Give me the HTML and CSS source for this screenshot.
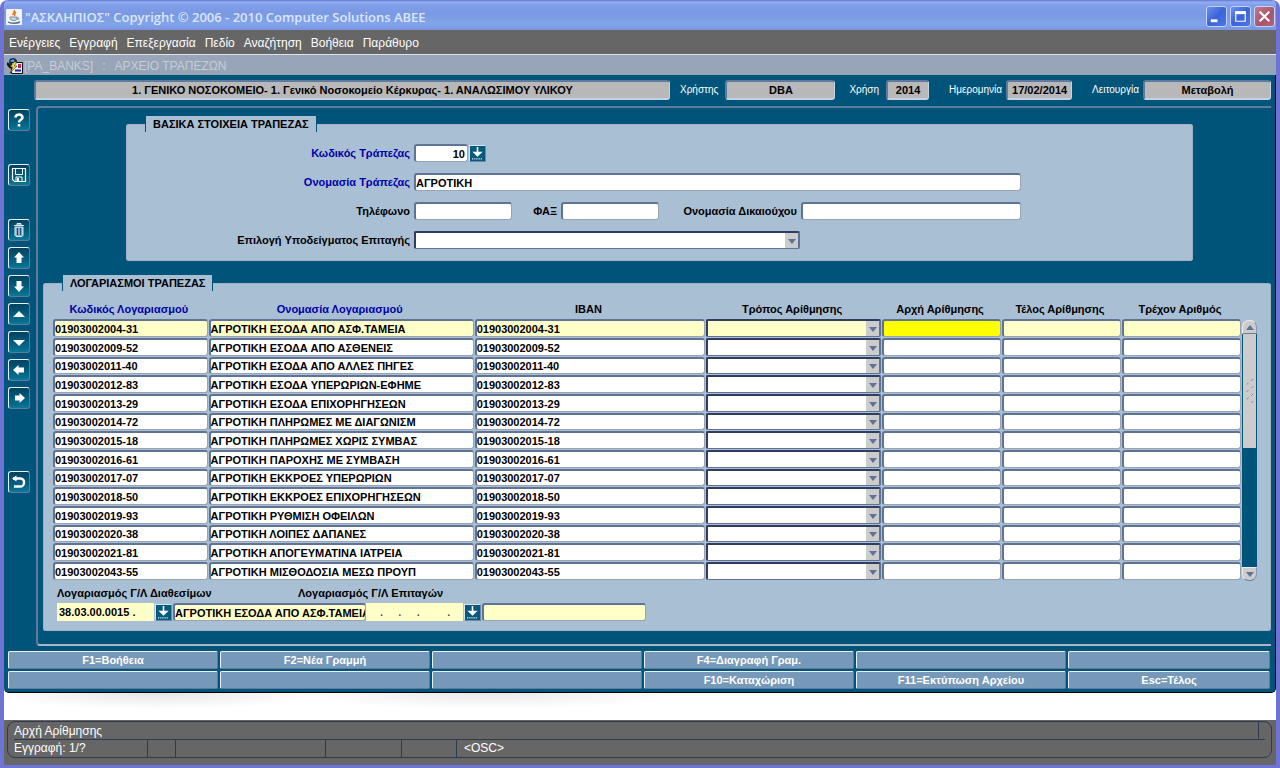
FILE: index.html
```
<!DOCTYPE html>
<html lang="el">
<head>
<meta charset="utf-8">
<meta name="viewport" content="width=device-width, initial-scale=1">
<title>ΑΣΚΛΗΠΙΟΣ</title>
<link rel="stylesheet" href="styles.css">
</head>
<body>
<div class="window">
  <header class="titlebar">
    <svg class="java" viewBox="0 0 16 16" aria-hidden="true"><rect x="0" y="0" width="16" height="16" rx="1" fill="#f4f4f0"/><path d="M8 1c2 2-2 3-1 5M10 3c-2 1-2 2-1 4" stroke="#e8752a" stroke-width="1.5" fill="none"/><path d="M4 8h7v2c0 2-6 2-7 0zM11 8.500c3 0 2 2 0 2" stroke="#7a8fa8" fill="#c9d3dd"/><path d="M2 13c2 1.500 9 1.500 12 0" stroke="#56708f" stroke-width="1.500" fill="none"/></svg>
    <h1 class="title">"ΑΣΚΛΗΠΙΟΣ" Copyright © 2006 - 2010 Computer Solutions ABEE</h1>
    <div class="winbuttons">
      <button class="winbtn" aria-label="Ελαχιστοποίηση"><svg viewBox="0 0 20 20"><path d="M4 13h7v3H4z" fill="#fff"/></svg></button>
      <button class="winbtn" aria-label="Μεγιστοποίηση"><svg viewBox="0 0 20 20"><path d="M5 5h10v10H5z" fill="none" stroke="#fff" stroke-width="1.200"/><path d="M4.500 4.500h11v3h-11z" fill="#fff"/></svg></button>
      <button class="winbtn close" aria-label="Κλείσιμο"><svg viewBox="0 0 20 20"><path d="M5 5l10 10M15 5L5 15" stroke="#fff" stroke-width="2.200"/></svg></button>
    </div>
  </header>
  <nav class="menubar">
    <button>Ενέργειες</button><button>Εγγραφή</button><button>Επεξεργασία</button><button>Πεδίο</button><button>Αναζήτηση</button><button>Βοήθεια</button><button>Παράθυρο</button>
  </nav>
  <div class="doctitle">
    <svg class="docicon" viewBox="0 0 16 16" aria-hidden="true"><circle cx="6" cy="4" r="4" fill="#16315f"/><path d="M3 3l3-2 2 2-2 2z" fill="#5a9bd0"/><path d="M4.500 4.500h11v11h-11z" fill="#eee" stroke="#111"/><path d="M0 5l4 5" stroke="#111" stroke-width="2.500"/><path d="M7 4L3 9h3l-3 6 7-7H7l3-4z" fill="#ffe52a" stroke="#111" stroke-width=".5"/><path d="M11 6h3v4h-3z" fill="#b82862"/><path d="M8 12.500h6" stroke="#2525a0" stroke-width="2"/></svg>
    <span>[PA_BANKS]</span><span>:</span><span>ΑΡΧΕΙΟ ΤΡΑΠΕΖΩΝ</span>
  </div>
  <main class="form">
    <div class="session">
      <output class="info unit">1. ΓΕΝΙΚΟ ΝΟΣΟΚΟΜΕΙΟ- 1. Γενικό Νοσοκομείο Κέρκυρας- 1. ΑΝΑΛΩΣΙΜΟΥ ΥΛΙΚΟΥ</output>
      <span class="pair"><label for="o-user">Χρήστης</label><output id="o-user" class="info user">DBA</output></span>
      <span class="pair"><label for="o-year">Χρήση</label><output id="o-year" class="info year">2014</output></span>
      <span class="pair tight"><label for="o-date">Ημερομηνία</label><output id="o-date" class="info date">17/02/2014</output></span>
      <span class="pair tight"><label for="o-mode">Λειτουργία</label><output id="o-mode" class="info mode">Μεταβολή</output></span>
    </div>
    <div class="workspace">
      <div class="tools">
        <button class="tool" aria-label="Βοήθεια"><svg viewBox="0 0 18 18"><path d="M5.500 6.500c0-4 7-4 7 0 0 2.500-3.500 2-3.500 5M9 13v2.500" fill="none" stroke="#fff" stroke-width="2.600"/></svg></button>
        <button class="tool save" aria-label="Αποθήκευση"><svg viewBox="0 0 18 18"><path d="M2.500 2.500h13v13h-11l-2-2z" fill="none" stroke="#fff" stroke-width="1.200"/><path d="M5.500 3v5.500h7V3M6 15v-4h6v4" fill="none" stroke="#fff"/><path d="M7 12h2v3H7z" fill="#fff"/></svg></button>
        <button class="tool trash" aria-label="Διαγραφή"><svg viewBox="0 0 18 18"><path d="M4 4.500h10M7 4V2.500h4V4M5 6v8.500l1 1h6l1-1V6z" fill="#8fabc2" stroke="#dce8f0"/><path d="M7.500 7v7M10.500 7v7" stroke="#0a5678"/></svg></button>
        <button class="tool" aria-label="Πρώτη εγγραφή"><svg viewBox="0 0 18 18"><path d="M9 3l5 5.500h-2.500V14h-5V8.500H4z" fill="#fff"/></svg></button>
        <button class="tool" aria-label="Τελευταία εγγραφή"><svg viewBox="0 0 18 18"><path d="M9 15l5-5.500h-2.500V4h-5v5.500H4z" fill="#fff"/></svg></button>
        <button class="tool" aria-label="Προηγούμενη εγγραφή"><svg viewBox="0 0 18 18"><path d="M9 6l6 6H3z" fill="#fff"/></svg></button>
        <button class="tool" aria-label="Επόμενη εγγραφή"><svg viewBox="0 0 18 18"><path d="M9 13l6-6H3z" fill="#fff"/></svg></button>
        <button class="tool" aria-label="Προηγούμενο πεδίο"><svg viewBox="0 0 18 18"><path d="M3 9l5.500-5v2.500H14v5H8.500V14z" fill="#fff"/></svg></button>
        <button class="tool" aria-label="Επόμενο πεδίο"><svg viewBox="0 0 18 18"><path d="M15 9l-5.500-5v2.500H5v5h4.500V14z" fill="#fff"/></svg></button>
        <button class="tool back" aria-label="Επιστροφή"><svg viewBox="0 0 18 18"><path d="M3 5.500h7.500c5 0 4.500 8 0 8H4" fill="none" stroke="#fff" stroke-width="2.400"/><path d="M6.500 2.500v6L2 5.500z" fill="#fff"/></svg></button>
      </div>
      <div class="frame">
        <fieldset class="panel bank">
          <legend>ΒΑΣΙΚΑ ΣΤΟΙΧΕΙΑ ΤΡΑΠΕΖΑΣ</legend>
          <div class="row"><label class="lead key" for="code">Κωδικός Τράπεζας</label><input id="code" class="field w-code" value="10"><button class="lov" aria-label="Λίστα τραπεζών"><svg viewBox="0 0 14 14"><path d="M7 1v7M4 6l3 3 3-3z" fill="#fff" stroke="#fff" stroke-width="1.500"/><path d="M2 12h10" stroke="#fff" stroke-dasharray="1 1"/></svg></button></div>
          <div class="row"><label class="lead key" for="name">Ονομασία Τράπεζας</label><input id="name" class="field w-name" value="ΑΓΡΟΤΙΚΗ"></div>
          <div class="row"><label class="lead" for="tel">Τηλέφωνο</label><input id="tel" class="field w-phone"><label class="mid fax" for="fax">ΦΑΞ</label><input id="fax" class="field w-phone"><label class="mid payee" for="payee">Ονομασία Δικαιούχου</label><input id="payee" class="field w-payee"></div>
          <div class="row"><label class="lead" for="tpl">Επιλογή Υποδείγματος Επιταγής</label><span class="combo w-tpl"><select id="tpl"><option></option></select></span></div>
        </fieldset>
        <fieldset class="panel accounts">
          <legend>ΛΟΓΑΡΙΑΣΜΟΙ ΤΡΑΠΕΖΑΣ</legend>
          <div class="gridwrap">
            <table class="grid">
              <colgroup><col class="c1"><col class="c2"><col class="c3"><col class="c4"><col class="c5"><col class="c5"><col class="c5"></colgroup>
              <thead><tr><th class="key">Κωδικός Λογαριασμού</th><th class="key">Ονομασία Λογαριασμού</th><th>IBAN</th><th>Τρόπος Αρίθμησης</th><th>Αρχή Αρίθμησης</th><th>Τέλος Αρίθμησης</th><th>Τρέχον Αριθμός</th></tr></thead>
              <tbody id="accounts"></tbody>
            </table>
            <div class="scroll">
              <button class="sbtn up" aria-label="Πάνω"></button>
              <div class="track"><div class="thumb"><svg viewBox="0 0 14 28"><path d="M4 7l2-2M9 3l2-2M4 15l2-2M9 11l2-2M4 23l2-2M9 19l2-2M9 27l2-2" stroke="#6c7d99"/></svg></div></div>
              <button class="sbtn down" aria-label="Κάτω"></button>
            </div>
          </div>
          <div class="ledger">
            <div class="gl first"><label for="gl1">Λογαριασμός Γ/Λ Διαθεσίμων</label>
              <div class="glrow"><input id="gl1" class="flat" value="38.03.00.0015 ."><button class="lov" aria-label="Λίστα διαθεσίμων"><svg viewBox="0 0 14 14"><path d="M7 1v7M4 6l3 3 3-3z" fill="#fff" stroke="#fff" stroke-width="1.500"/><path d="M2 12h10" stroke="#fff" stroke-dasharray="1 1"/></svg></button><input class="field pale w-gl1" aria-label="Περιγραφή διαθεσίμων" value="ΑΓΡΟΤΙΚΗ ΕΣΟΔΑ ΑΠΟ ΑΣΦ.ΤΑΜΕΙΑ"></div></div>
            <div class="gl second"><label for="gl2">Λογαριασμός Γ/Λ Επιταγών</label>
              <div class="glrow"><input id="gl2" class="flat dots" value=".     .     .         ."><button class="lov" aria-label="Λίστα επιταγών"><svg viewBox="0 0 14 14"><path d="M7 1v7M4 6l3 3 3-3z" fill="#fff" stroke="#fff" stroke-width="1.500"/><path d="M2 12h10" stroke="#fff" stroke-dasharray="1 1"/></svg></button><input class="field pale w-gl2" aria-label="Περιγραφή επιταγών"></div></div>
          </div>
        </fieldset>
      </div>
    </div>
    <div class="fkeys">
      <button>F1=Βοήθεια</button><button>F2=Νέα Γραμμή</button><button aria-label="F3"></button><button>F4=Διαγραφή Γραμ.</button><button aria-label="F5"></button><button aria-label="F6"></button>
      <button aria-label="F7"></button><button aria-label="F8"></button><button aria-label="F9"></button><button>F10=Καταχώριση</button><button>F11=Εκτύπωση Αρχείου</button><button>Esc=Τέλος</button>
    </div>
  </main>
  <div class="desk"></div>
  <footer class="status">
    <div class="statusbox">
      <div class="line hint"><span>Αρχή Αρίθμησης</span></div>
      <div class="line cells"><span class="s1">Εγγραφή: 1/?</span><span class="s2"></span><span class="s3"></span><span class="s4"></span><span class="s5"></span><span>&lt;OSC&gt;</span></div>
    </div>
  </footer>
</div>
<script src="app.js"></script>
</body>
</html>
```
FILE: styles.css
```
* { box-sizing: border-box; }
body { margin: 0; background: #fff; font: bold 11px/14px "Liberation Sans", Arial, sans-serif; color: #000; }
button, input, select { font: inherit; color: inherit; margin: 0; padding: 0; border-radius: 0; }
button svg { display: block; width: 100%; height: 100%; }

.window { display: flex; flex-direction: column; min-height: 100vh; background: #fff; border: solid #6d74d6; border-width: 0 4px 4px; border-radius: 8px 8px 0 0; overflow: hidden; }
.titlebar { display: flex; align-items: center; height: 30px; margin: 0 -4px; padding: 3px 5px 0 6px; gap: 3px; background: linear-gradient(#6673d0 0, #90aef0 2px, #7f9de8 6px, #7b98e2 14px, #82a5ea 24px, #7994df 100%); }
.java { width: 16px; height: 16px; }
.title { flex: 1; margin: 0; font: 600 13px/18px "Open Sans", "Noto Sans", sans-serif; color: #dbe6fb; white-space: nowrap; }
.winbuttons { display: flex; gap: 3px; }
.winbtn { width: 21px; height: 21px; border: 1px solid #c2d2f8; border-radius: 3px; background: linear-gradient(135deg, #6a92f0, #3d62d8 50%, #4c7ae8); }
.winbtn.close { background: linear-gradient(135deg, #c27a90, #a95468 60%, #b0687e); }

.menubar { display: flex; align-items: center; gap: 9px; height: 24px; padding: 2px 0 0 5px; background: #666; }
.menubar button { border: 0; background: none; color: #fff; font-weight: 400; font-size: 12px; white-space: nowrap; }
.doctitle { display: flex; align-items: center; height: 21px; padding: 1px 0 0 3px; background: #98a4b8; border-top: 1px solid #dde3ea; color: #c6ccd6; font-weight: 400; font-size: 12px; white-space: pre; }
.doctitle span + span { margin-left: 9px; }
.docicon { width: 16px; height: 16px; margin-right: 1px; }

.form { background: #00547a; padding: 5px 1px 3px 4px; border-right: 1px solid #000; border-bottom: 1px solid #000; border-radius: 0 0 5px 5px; }
.session { display: flex; align-items: center; padding: 0 3px 0 26px; gap: 14px; }
.info { display: block; height: 20px; border: 2px solid; border-color: #5e7a9e #c3d3e2 #c3d3e2 #5e7a9e; border-right-width: 1px; border-radius: 3px; background: #b8b8b8; text-align: center; line-height: 17px; white-space: nowrap; }
.unit { flex: 1; margin-right: -4px; }
.pair { display: flex; align-items: center; gap: 7px; color: #fff; font-size: 10px; font-weight: 400; }
.pair.tight { gap: 4px; margin-left: 6px; }
.pair .info { color: #000; font-size: 11px; font-weight: 700; }
.user { width: 110px; }
.year { width: 43px; }
.date { width: 66px; }
.mode { width: 128px; }

.workspace { display: flex; gap: 6px; margin: 6px 3px 0 0; }
.tools { display: flex; flex-direction: column; gap: 6px; padding-top: 3px; }
.tool { width: 22px; height: 22px; padding: 1px; border: 1px solid; border-color: #e6f0f6 #5e7a9e #5e7a9e #e6f0f6; border-radius: 3px; background: linear-gradient(#01425f, #046a8c 80%, #0f7896); }
.save, .trash { margin-top: 27px; }
.back { margin-top: 56px; }
.frame { flex: 1; min-width: 0; padding: 8px 0 13px 5px; border: 2px solid #5e7a9e; border-bottom-color: #a9b4c4; border-right: 0; border-radius: 4px 0 0 4px; }

.panel { min-width: 0; margin: 0; padding: 0; border: 1px solid #a0b2c4; border-radius: 3px; background: #a9bfd3; }
.panel legend { height: 16px; padding: 0 7px; line-height: 17px; background: #a9bfd3; border: solid #00547a; border-width: 0 1px; }
.bank { margin: 0 78px 0 83px; padding: 12px 0 11px; }
.bank legend { margin-left: 18px; }
.row { display: flex; align-items: center; height: 18px; }
.row + .row { margin-top: 11px; }
.key, .row .key { color: #0000a8; }
.lead { width: 283px; margin-right: 4px; text-align: right; white-space: nowrap; }
.mid { text-align: right; margin-right: 4px; white-space: nowrap; }
.fax { width: 45px; }
.payee { width: 138px; }
.field { height: 18px; border: solid; border-width: 2px 1px 1px 2px; border-color: #5f7396 #98a4b4 #98a4b4 #5f7396; border-radius: 3px; background: #fff; }
.w-code { width: 54px; padding-right: 2px; text-align: right; }
.w-name { width: 607px; }
.w-phone { width: 98px; }
.w-payee { width: 220px; }
.w-tpl { width: 386px; height: 18px; }
.lov { width: 17px; height: 17px; margin-left: 1px; border: 1px solid; border-color: #d8e4ee #6c88a6 #6c88a6 #d8e4ee; background: #075a7c; }

.combo { display: block; position: relative; }
.combo select { display: block; appearance: none; width: 100%; height: 100%; border: 1px solid #5f7396; border-width: 2px 2px 1px 2px; border-color: #2e3d60 #5f7396 #5f7396 #2e3d60; border-radius: 2px; background: linear-gradient(#ccc, #ccc) right / 13px 100% no-repeat #fff; }
.combo::after { content: ""; position: absolute; right: 4px; bottom: 5px; border: solid transparent; border-width: 5px 4px 0; border-top-color: #5f7396; pointer-events: none; }

.accounts { margin-top: 14px; padding: 10px 13px 9px 9px; }
.accounts legend { margin-left: 9px; }
.gridwrap { display: flex; }
.grid { flex: 1; table-layout: fixed; border-collapse: collapse; width: 0; }
.grid th { height: 18px; padding: 0 4px 1px 0; line-height: 17px; white-space: nowrap; }
.grid td { height: 19px; padding: 0 1px 1px 0; }
.grid tr:nth-child(3n) td { height: 18px; }
.grid td .field { display: block; width: 100%; height: 18px; }
.grid td .combo { height: 18px; }
.grid tr:nth-child(3n) .field, .grid tr:nth-child(3n) .combo { height: 17px; }
.c1 { width: 13.1%; }
.c2 { width: 22.4%; }
.c3 { width: 19.5%; }
.c4 { width: 14.8%; }
.c5 { width: 10.1%; }
.current .field, .current select { background-color: #ffffc8; }
.current .field.active { background: #ff0; }

.scroll { display: flex; flex-direction: column; width: 15px; margin: 19px 0 0; }
.sbtn { position: relative; width: 15px; height: 14px; border: 1px solid; border-color: #eee #8a97ab #6c7d99 #eee; background: #ccc; }
.up { border-radius: 7px 7px 0 0; }
.down { border-radius: 0 0 7px 7px; }
.sbtn::after { content: ""; position: absolute; left: 3px; top: 4px; border: solid transparent; }
.up::after { border-width: 0 4px 5px; border-bottom-color: #5f7396; }
.down::after { border-width: 5px 4px 0; border-top-color: #5f7396; }
.track { flex: 1; background: #00547a; }
.thumb { display: flex; align-items: center; height: 49%; margin: 0 1px; background: #ccc; }
.thumb svg { width: 14px; height: 28px; }

.ledger { display: flex; margin-top: 4px; padding-left: 4px; }
.gl { display: flex; flex-direction: column; }
.gl label { margin-bottom: 2px; line-height: 16px; white-space: nowrap; }
.second label { margin-left: -68px; }
.glrow { display: flex; align-items: center; height: 18px; }
.flat { width: 97px; height: 18px; padding-left: 2px; border: 0; background: #ffffc8; }
.dots { padding-left: 14px; color: #556; }
.pale { background: #ffffc8; }
.glrow .pale { margin-left: 1px; }
.w-gl1 { width: 193px; }
.w-gl2 { width: 164px; }

.fkeys { display: grid; grid-template-columns: repeat(5, 210fr) 202fr; gap: 2px; margin: 5px 4px 0 0; }
.fkeys button { height: 18px; border: 1px solid; border-color: #e8f2f8 #5e7a9e #5e7a9e #e8f2f8; border-radius: 2px; background: #7698b9; color: #fff; }

.desk { flex: 1; min-height: 27px; background: radial-gradient(ellipse 13% 60% at 12% 0, #e6e6e6, transparent), radial-gradient(ellipse 15% 60% at 38% 0, #e9e9e9, transparent), #fff; }
.status { padding: 1px 4px 7px 3px; background: #666; color: #fff; font-weight: 400; font-size: 12px; }
.statusbox { padding: 0 6px; border: 1px solid #2e3a50; border-radius: 8px; }
.line { display: flex; height: 18px; line-height: 18px; }
.hint { border-bottom: 1px solid #2e3a50; padding-right: 6px; }
.hint span { flex: 1; border-right: 1px solid #2e3a50; }
.cells { height: 17px; gap: 7px; line-height: 17px; }
.cells span + span { border-left: 1px solid #2e3a50; padding-left: 7px; }
.s1 { width: 126px; }
.s2 { width: 21px; }
.s3 { width: 143px; }
.s4 { width: 69px; }
.s5 { width: 48px; }
```
FILE: app.js
```
const accounts = [
  ["01903002004-31", "ΑΓΡΟΤΙΚΗ ΕΣΟΔΑ ΑΠΟ ΑΣΦ.ΤΑΜΕΙΑ"],
  ["01903002009-52", "ΑΓΡΟΤΙΚΗ ΕΣΟΔΑ ΑΠΟ ΑΣΘΕΝΕΙΣ"],
  ["01903002011-40", "ΑΓΡΟΤΙΚΗ ΕΣΟΔΑ ΑΠΟ ΑΛΛΕΣ ΠΗΓΕΣ"],
  ["01903002012-83", "ΑΓΡΟΤΙΚΗ ΕΣΟΔΑ ΥΠΕΡΩΡΙΩΝ-ΕΦΗΜΕ"],
  ["01903002013-29", "ΑΓΡΟΤΙΚΗ ΕΣΟΔΑ ΕΠΙΧΟΡΗΓΗΣΕΩΝ"],
  ["01903002014-72", "ΑΓΡΟΤΙΚΗ ΠΛΗΡΩΜΕΣ ΜΕ ΔΙΑΓΩΝΙΣΜ"],
  ["01903002015-18", "ΑΓΡΟΤΙΚΗ ΠΛΗΡΩΜΕΣ ΧΩΡΙΣ ΣΥΜΒΑΣ"],
  ["01903002016-61", "ΑΓΡΟΤΙΚΗ ΠΑΡΟΧΗΣ ΜΕ ΣΥΜΒΑΣΗ"],
  ["01903002017-07", "ΑΓΡΟΤΙΚΗ ΕΚΚΡΟΕΣ ΥΠΕΡΩΡΙΩΝ"],
  ["01903002018-50", "ΑΓΡΟΤΙΚΗ ΕΚΚΡΟΕΣ ΕΠΙΧΟΡΗΓΗΣΕΩΝ"],
  ["01903002019-93", "ΑΓΡΟΤΙΚΗ ΡΥΘΜΙΣΗ ΟΦΕΙΛΩΝ"],
  ["01903002020-38", "ΑΓΡΟΤΙΚΗ ΛΟΙΠΕΣ ΔΑΠΑΝΕΣ"],
  ["01903002021-81", "ΑΓΡΟΤΙΚΗ ΑΠΟΓΕΥΜΑΤΙΝΑ ΙΑΤΡΕΙΑ"],
  ["01903002043-55", "ΑΓΡΟΤΙΚΗ ΜΙΣΘΟΔΟΣΙΑ ΜΕΣΩ ΠΡΟΥΠ"]
];
const text = (label, value = "", cls = "") =>
  `<td><input class="field ${cls}" aria-label="${label}" value="${value}"></td>`;

document.getElementById("accounts").innerHTML = accounts.map(([code, name], i) =>
  `<tr class="${i === 0 ? "current" : ""}">` +
  text("Κωδικός Λογαριασμού", code) +
  text("Ονομασία Λογαριασμού", name) +
  text("IBAN", code) +
  `<td><span class="combo"><select aria-label="Τρόπος Αρίθμησης"><option></option></select></span></td>` +
  text("Αρχή Αρίθμησης", "", i === 0 ? "active" : "") +
  text("Τέλος Αρίθμησης") +
  text("Τρέχον Αριθμός") +
  `</tr>`).join("");
```
